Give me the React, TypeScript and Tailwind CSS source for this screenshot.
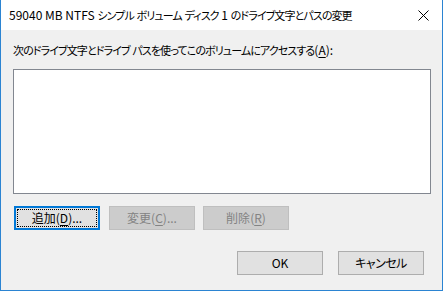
import React from 'react';

const font = { fontFamily: '"Noto Sans CJK JP", "Liberation Sans", sans-serif' };

// narrow kana, like Yu Gothic UI
function J({ children }: { children: React.ReactNode }) {
  return <span className='text-[11px] tracking-[-0.9px] [font-feature-settings:"palt"]'>{children}</span>;
}

function Btn({ label, keyChar, tail = '', disabled = false, focused = false }: { label: string; keyChar: string; tail?: string; disabled?: boolean; focused?: boolean }) {
  const base = 'relative flex h-[24px] w-[86px] items-center justify-center text-[12px] [font-feature-settings:"palt"]';
  const look = disabled
    ? 'border border-[#bfbfbf] bg-[#cccccc] text-[#838383]'
    : focused
      ? 'border-2 border-[#0078d7] bg-[#e1e1e1] text-black'
      : 'border border-[#adadad] bg-[#e1e1e1] text-black';
  return (
    <div className={`${base} ${look}`}>
      {focused && <div className="absolute inset-[1px] border border-dotted border-black" />}
      <span>
        {label}(<span className="underline underline-offset-2">{keyChar}</span>){tail}
      </span>
    </div>
  );
}

export default function App() {
  return (
    <div style={font} className="flex h-[291px] w-[443px] flex-col border-x border-b border-[#2b84d2] bg-[#f0f0f0] text-black">
      {/* title bar */}
      <div className="flex h-[30px] shrink-0 items-center justify-between bg-white pl-[8px] pr-[10px]">
        <span className="whitespace-pre text-[12px]">
          59040 MB NTFS <J>シンプル</J> <J>ボリューム</J> <J>ディスク</J> 1 <J>のドライブ文字とパスの変更</J>
        </span>
        <svg width="11" height="11" viewBox="0 0 11 11" className="mr-[3px]">
          <path d="M0.5 0.5 L10.5 10.5 M10.5 0.5 L0.5 10.5" stroke="#000" strokeWidth="1" fill="none" />
        </svg>
      </div>

      <div className="flex flex-1 flex-col pl-[12px] pr-[11px]">
        <div className="mt-[12px] h-[16px] whitespace-pre text-[12px] leading-[16px]">
          <J>次のドライブ文字とドライブ</J> <J>パスを使ってこのボリュームにアクセスする</J>(<span className="underline underline-offset-2">A</span>):
        </div>
        <div className="mt-[11px] h-[125px] w-[418px] border border-[#828790] bg-white" />

        <div className="mt-[12px] flex gap-[9px] pl-[1px]">
          <Btn label="追加" keyChar="D" tail="..." focused />
          <Btn label="変更" keyChar="C" tail="..." disabled />
          <div className="-ml-[1px]">
            <Btn label="削除" keyChar="R" disabled />
          </div>
        </div>

        <div className="mt-[21px] flex justify-end gap-[15px] pr-[7px]">
          <div className="flex h-[24px] w-[86px] items-center justify-center border border-[#adadad] bg-[#e1e1e1] text-[12px]">OK</div>
          <div className='flex h-[24px] w-[86px] items-center justify-center border border-[#adadad] bg-[#e1e1e1] text-[12px] tracking-[-0.5px] [font-feature-settings:"palt"]'>キャンセル</div>
        </div>
      </div>
    </div>
  );
}
